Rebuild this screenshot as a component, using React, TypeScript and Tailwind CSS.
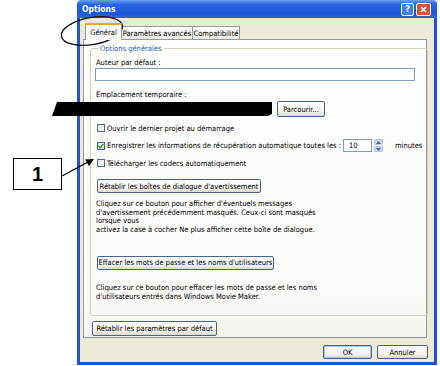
import React from "react";

const Btn = ({ label, className = "" }: { label: string; className?: string }) => (
  <div
    className={`flex items-center justify-center h-[14px] rounded-[2px] border border-[#4a6487] bg-[linear-gradient(to_bottom,#ffffff,#f3f2ec_70%,#dcd9cc)] text-black whitespace-nowrap ${className}`}
  >
    {label}
  </div>
);

const Check = ({ checked = false }: { checked?: boolean }) => (
  <div className="w-[8px] h-[8px] border border-[#4a6e93] bg-[linear-gradient(135deg,#e6e5dc,#ffffff)] flex items-center justify-center shrink-0">
    {checked && (
      <svg width="6" height="6" viewBox="0 0 6 6">
        <path d="M0.5 3 L2.3 4.8 L5.5 1" fill="none" stroke="#21a121" strokeWidth="1.4" />
      </svg>
    )}
  </div>
);

export default function App() {
  return (
    <div className="relative w-[440px] h-[366px] bg-white overflow-hidden text-[7.5px] leading-[9px] text-black [font-family:'DejaVu_Sans_Condensed','DejaVu_Sans',sans-serif]">
      <div className="ml-[77px] w-[360px] flex flex-col">
        {/* title bar */}
        <div className="h-[18px] flex items-center pl-[5px] pr-[6px] bg-[linear-gradient(to_bottom,#6aa3f7,#2a64e4_25%,#1d57d9_75%,#2c68e6)] rounded-t-[4px]">
          <span className="text-white font-bold text-[8.5px]">Options</span>
          <div className="ml-auto flex gap-[2px]">
            <div className="w-[13px] h-[13px] rounded-[2px] border border-white bg-[#3f82f3] text-white font-bold text-[9px] leading-[11px] text-center">?</div>
            <div className="w-[15px] h-[13px] rounded-[2px] border border-white bg-[#e15430] flex items-center justify-center">
              <svg width="7" height="7" viewBox="0 0 7 7">
                <path d="M1 1 L6 6 M6 1 L1 6" stroke="white" strokeWidth="1.6" />
              </svg>
            </div>
          </div>
        </div>

        {/* body */}
        <div className="bg-[#ece9d8] border-x-[3px] border-b-[3px] border-[#1f52d8] pl-[3px] pr-[7px] pb-[3px]">
          {/* tabs */}
          <div className="mt-[5px] h-[16px] flex items-end pl-[2px]">
            <div className="relative z-10 w-[37px] h-[17px] -mb-px bg-white border-x border-[#919b9c] border-t-2 border-t-[#f0a030] flex items-center justify-center">
              Général
            </div>
            <div className="w-[71px] h-[13px] border-t border-r border-[#919b9c] bg-[linear-gradient(to_bottom,#ffffff,#ecebe5)] flex items-center justify-center">
              Paramètres avancés
            </div>
            <div className="w-[47px] h-[13px] border-t border-r border-[#919b9c] bg-[linear-gradient(to_bottom,#ffffff,#ecebe5)] flex items-center justify-center">
              Compatibilité
            </div>
          </div>

          {/* panel */}
          <div className="h-[299px] border border-[#919b9c] bg-[linear-gradient(to_bottom,#fdfdfc,#fbfbf9_85%,#f3f2ec)] px-[6px] pt-[4px] flex flex-col">
            <fieldset className="border border-[#d0d0bf] rounded-[3px] pl-[5px] pr-[5px] pb-[14px]">
              <legend className="ml-[2px] px-[2px] text-[#2f5cc5]">Options générales</legend>
              <div className="mt-[5px]">Auteur par défaut :</div>
              <div className="mt-[1px] h-[13px] w-[320px] -ml-px border border-[#7f9db9] bg-white" />
              <div className="mt-[9px]">Emplacement temporaire :</div>
              <div className="mt-[2px] h-[16px] flex items-center">
                <div className="ml-[-44px] w-[220px] h-[14px] bg-black [clip-path:polygon(5px_0,100%_0,100%_85%,98%_100%,0_100%)]" />
                <Btn label="Parcourir..." className="ml-[5px] w-[48px] h-[16px]" />
              </div>
              <div className="mt-[6px] h-[10px] flex items-center pl-[1px] gap-[2px]">
                <Check />
                <span>Ouvrir le dernier projet au démarrage</span>
              </div>
              <div className="mt-[6px] h-[13px] flex items-center pl-[1px] gap-[2px]">
                <Check checked />
                <span className="w-[234px] whitespace-nowrap">
                  Enregistrer les informations de récupération automatique toutes les :
                </span>
                <div className="h-[13px] w-[29px] border border-[#7f9db9] bg-white flex items-center pl-[5px]">10</div>
                <div className="h-[13px] w-[9px] flex flex-col gap-px">
                  <div className="flex-1 rounded-[1px] bg-[#c3d5fb] border border-[#b3c8f5] flex items-center justify-center">
                    <svg width="5" height="3" viewBox="0 0 5 3"><path d="M0 3 L2.5 0 L5 3Z" fill="#4d6185" /></svg>
                  </div>
                  <div className="flex-1 rounded-[1px] bg-[#c3d5fb] border border-[#b3c8f5] flex items-center justify-center">
                    <svg width="5" height="3" viewBox="0 0 5 3"><path d="M0 0 L2.5 3 L5 0Z" fill="#4d6185" /></svg>
                  </div>
                </div>
                <span className="ml-[10px]">minutes</span>
              </div>
              <div className="mt-[6px] h-[10px] flex items-center pl-[1px] gap-[2px]">
                <Check />
                <span>Télécharger les codecs automatiquement</span>
              </div>
              <Btn label="Rétablir les boîtes de dialogue d'avertissement" className="mt-[11px] ml-[1px] w-[164px]" />
              <p className="mt-[7px] leading-[8.7px]">
                Cliquez sur ce bouton pour afficher d'éventuels messages
                <br />
                d'avertissement précédemment masqués. Ceux-ci sont masqués
                <br />
                lorsque vous
                <br />
                activez la case à cocher Ne plus afficher cette boîte de dialogue.
              </p>
              <Btn label="Effacer les mots de passe et les noms d'utilisateurs" className="mt-[21px] ml-[1px] w-[177px]" />
              <p className="mt-[14px] leading-[8.7px]">
                Cliquez sur ce bouton pour effacer les mots de passe et les noms
                <br />
                d'utilisateurs entrés dans Windows Movie Maker.
              </p>
            </fieldset>
            <Btn label="Rétablir les paramètres par défaut" className="mt-[5px] ml-[2px] w-[125px] h-[15px]" />
          </div>

          {/* footer */}
          <div className="mt-[7px] flex justify-end gap-[5px] -mr-px">
            <Btn label="OK" className="w-[49px] border-[#3c5f98] shadow-[inset_0_0_0_1px_#a9c3f0]" />
            <Btn label="Annuler" className="w-[51px]" />
          </div>
        </div>
      </div>

      {/* annotation: ellipse round the first tab */}
      <svg className="absolute left-0 top-0" width="140" height="60" viewBox="0 0 140 60">
        <ellipse cx="92" cy="31" rx="31" ry="13.5" transform="rotate(-10 92 31)" fill="none" stroke="#111" strokeWidth="1.3" />
      </svg>

      {/* annotation: callout 1 */}
      <div className="absolute left-[13px] top-[158px] w-[49px] h-[32px] border-[1.5px] border-black bg-white flex items-center justify-center text-[20px] font-bold [font-family:'Liberation_Sans',sans-serif]">
        1
      </div>
      <svg className="absolute left-0 top-0" width="120" height="200" viewBox="0 0 120 200">
        <line x1="62" y1="176" x2="88" y2="162" stroke="black" strokeWidth="1.3" />
        <path d="M94 159 L85 159.5 L89 166 Z" fill="black" />
      </svg>
    </div>
  );
}
